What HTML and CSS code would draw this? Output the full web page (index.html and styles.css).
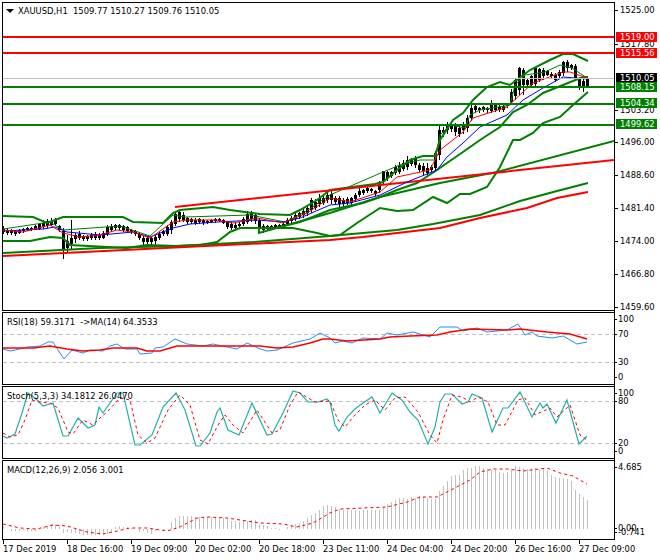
FILE: index.html
```html
<!DOCTYPE html>
<html lang="en">
<head>
<meta charset="utf-8">
<title>XAUUSD,H1</title>
<link rel="stylesheet" href="styles.css">
</head>
<body>
<div class="chart">
  <div class="grid">
    <div class="plots">
      <div class="pane pane-main">
        <svg class="plot" viewBox="3 3 611 307" aria-hidden="true">
          <path class="wick" d="M3 226V234M7 228V235M11 229V235M15 230V236M19 229V234M23 228V233M27 227V231M31 227V231M35 225V230M39 224V230M43 220V229M47 219V228M51 218V226M55 218V225M59 225V232M63 228V259M67 235V252M71 220V250M75 233V243M79 231V240M83 235V241M87 235V241M91 233V240M95 232V240M99 233V240M103 231V239M107 225V236M111 224V232M115 224V230M119 224V230M123 225V232M127 226V233M131 229V234M135 230V236M139 232V240M143 236V245M147 236V245M151 237V245M155 235V245M159 232V240M163 230V236M167 225V236M171 220V234M175 212V226M179 210V222M183 212V222M187 217V224M191 218V224M195 218V225M199 218V224M203 219V225M207 220V224M211 219V223M215 218V223M219 218V222M223 219V224M227 221V229M231 222V230M235 223V230M239 222V228M243 217V226M247 211V224M251 211V222M255 213V224M259 218V233M263 224V233M267 225V231M271 225V230M275 224V229M279 224V229M283 222V228M287 218V225M291 216V223M295 213V221M299 212V219M303 209V218M307 206V216M311 198V213M315 199V210M319 194V207M323 196V205M327 192V203M331 191V204M335 196V204M339 196V207M343 198V207M347 197V205M351 197V206M355 193V201M359 188V197M363 189V195M367 187V193M371 188V193M375 190V196M379 181V193M383 171V185M387 171V181M391 171V178M395 165V175M399 162V174M403 160V171M407 156V170M411 158V166M415 156V168M419 163V172M423 163V175M427 163V176M431 165V172M435 151V170M439 125V160M443 127V137M447 122V134M451 124V132M455 123V136M459 126V137M463 122V134M467 115V132M471 105V121M475 105V113M479 107V113M483 106V112M487 107V113M491 100V113M495 103V112M499 105V112M503 104V112M507 103V108M511 89V104M515 78V100M519 67V95M523 68V95M527 78V86M531 75V87M535 67V86M539 68V82M543 68V80M547 70V76M551 72V78M555 73V82M559 70V78M563 61V76M567 60V72M571 64V70M575 64V80M579 78V90M583 79V92M587 78V88"/>
          <path class="body" d="M3 229V232M7 230V233M11 230V233M15 231V234M19 230V233M23 229V231M27 228V230M31 228V230M35 226V229M39 224V229M43 223V227M47 221V226M51 222V225M55 220V224M59 226V230M63 231V250M67 241V248M71 238V244M75 235V239M79 234V238M83 236V239M87 236V239M91 235V238M95 234V238M99 235V238M103 233V238M107 227V234M111 226V230M115 225V228M119 225V228M123 226V230M127 227V231M131 230V232M135 231V234M139 234V238M143 238V242M147 238V242M151 238V242M155 237V241M159 234V238M163 231V234M167 227V234M171 222V230M175 214V224M179 212V219M183 215V220M187 218V222M191 219V222M195 220V223M199 219V222M203 220V223M207 221V223M211 220V222M215 219V221M219 219V221M223 220V223M227 222V227M231 224V228M235 225V228M239 224V226M243 219V224M247 214V222M251 213V219M255 215V221M259 220V229M263 226V230M267 226V229M271 226V228M275 225V227M279 225V227M283 224V226M287 220V224M291 218V221M295 215V219M299 213V217M303 211V215M307 208V213M311 200V210M315 202V208M319 198V204M323 198V203M327 195V200M331 194V200M335 198V202M339 198V204M343 200V204M347 199V203M351 198V203M355 195V199M359 191V195M363 190V193M367 188V191M371 189V191M375 191V194M379 182V190M383 171V182M387 172V178M391 172V176M395 167V173M399 165V172M403 163V169M407 160V167M411 160V164M415 158V165M419 165V170M423 166V171M427 168V173M431 167V170M435 153V168M439 130V155M443 130V133M447 125V130M451 126V129M455 126V132M459 128V134M463 124V130M467 118V128M471 108V118M475 106V110M479 108V110M483 107V110M487 108V110M491 104V111M495 105V110M499 107V110M503 106V110M507 104V106M511 92V102M515 80V96M519 68V90M523 70V85M527 80V85M531 76V85M535 68V84M539 69V80M543 70V76M547 71V75M551 74V76M555 75V80M559 72V76M563 62V73M567 62V68M571 65V68M575 66V78M579 79V86M583 81V87M587 78V87"/>
          <path class="line-green" d="M3 253L100 248 177 246 253 242 330 236 363 233 397 230 433 224 480 215 520 201 557 191 588 183"/>
          <path class="line-green" d="M259 227V233L330 213 380 197 440 183 497 172 614 141"/>
          <path class="line-green" d="M3 216L33 217 47 223 63 217 123 217 133 222 163 223 173 213 180 210 213 207 230 210 260 214 290 215 300 210 317 200 330 190 375 184 383 182 397 170 410 160 423 156 435 156 440 140 453 120 463 113 473 100 487 87 500 82 510 85 530 70 550 60 563 54 573 54 588 61"/>
          <path class="line-green" d="M3 241L30 241 50 237 63 238 70 245 127 248 147 245 177 246 200 245 217 242 230 232 240 228 257 228 293 228 317 233 330 236 340 235 357 223 380 208 397 211 413 210 433 197 447 203 460 194 470 194 487 187 500 167 513 140 520 140 533 133 543 123 560 117 573 105 588 92"/>
          <path class="line-green" d="M267 230L300 222 330 210 363 203 380 197 397 190 417 183 437 170 447 163 463 152 480 140 500 127 513 112 527 105 543 93 563 85 583 77 588 77"/>
          <path class="line-thin-green" d="M3 229L50 222 63 230 120 226 150 236 173 215 185 217 250 215 285 222 305 212 330 195 383 172 400 165 420 160 435 160 440 135 450 125 465 128 470 115 480 110 510 105 515 85 525 75 545 72 560 65 572 68 587 78"/>
          <path class="line-red" d="M3 256L330 240 363 237 397 233 440 228 480 218 527 208 557 198 588 192"/>
          <path class="line-red" d="M175 207L614 160"/>
          <path class="line-thin-blue" d="M3 231L43 229 55 227 67 232 100 235 133 232 150 237 173 228 190 224 217 222 257 220 283 222 300 218 330 205 350 203 380 195 407 182 437 170 447 157 463 143 480 127 507 115 523 100 543 88 563 77 587 79"/>
          <path class="line-thin-red" d="M3 230L23 232 50 225 63 233 80 237 100 235 117 230 133 232 150 238 173 222 187 220 217 220 233 223 257 218 283 223 307 213 330 198 350 202 380 192 397 177 430 170 440 150 463 132 473 118 507 107 523 92 533 83 563 72 570 72 587 78"/>
          <path class="level-now" d="M3 78.5H614"/>
          <path class="level-red" d="M3 37H614M3 53H614"/>
          <path class="level-green" d="M3 87H614M3 104H614M3 125H614"/>
        </svg>
        <div class="legend legend-main"><span class="caret"></span>XAUUSD,H1&nbsp; 1509.77 1510.27 1509.76 1510.05</div>
      </div>
      <div class="pane pane-sub">
        <svg class="plot" viewBox="3 313 611 71" aria-hidden="true">
          <path class="dash-level" d="M3 334.5H614M3 362.5H614"/>
          <path class="rsi" d="M3 349L10 351 20 349 27 347 40 346 48 342 53 342 58 350 64 359 72 350 83 353 90 350 103 351 110 346 117 344 125 349 137 349 140 354 152 353 155 348 163 347 175 339 187 344 203 346 213 344 227 347 237 349 247 343 258 348 267 351 277 350 293 343 310 339 320 333 330 338 335 343 343 341 352 343 363 338 380 339 387 333 397 335 413 332 430 337 440 327 457 327 463 331 477 328 487 332 507 330 518 324 525 335 532 332 537 336 552 338 563 336 577 344 587 342"/>
          <path class="rsi-ma" d="M3 348L33 348 50 346 67 349 83 351 100 350 113 348 137 348 147 351 160 351 177 346 230 346 260 346 277 348 293 347 310 343 323 339 330 339 347 341 380 339 390 337 410 336 437 335 450 332 470 329 507 330 520 329 547 332 570 334 587 339"/>
        </svg>
        <div class="legend">RSI(18) 59.3171&nbsp; -&gt;MA(14) 64.3533</div>
      </div>
      <div class="pane pane-sub">
        <svg class="plot" viewBox="3 387 611 71" aria-hidden="true">
          <path class="dash-level" d="M3 401.5H614M3 443.5H614"/>
          <path class="stoch" d="M3 436L7 438 15 434 22 413 28 393 35 398 43 406 53 403 63 436 68 436 78 418 88 428 95 425 99 407 103 413 117 393 123 393 135 445 140 445 152 435 163 407 176 393 185 410 196 446 200 446 210 433 217 412 220 408 228 430 239 435 252 403 267 435 272 434 283 413 293 391 300 393 308 402 318 402 327 399 330 402 335 425 339 431 347 417 355 409 363 403 372 397 380 413 392 393 402 400 410 412 418 420 428 444 435 427 440 402 445 394 452 394 462 404 468 402 472 394 482 398 492 432 503 408 508 408 520 392 532 417 540 403 543 408 547 404 556 423 567 400 579 444 587 436"/>
          <path class="signal" d="M3 433L10 437 18 435 25 420 32 400 40 402 50 403 58 408 68 432 73 434 83 420 93 425 100 418 107 412 120 398 130 400 138 435 147 443 155 438 168 410 180 395 190 405 200 440 208 444 218 425 225 415 233 425 243 433 257 410 272 433 280 430 290 405 298 392 305 396 315 402 330 401 338 420 345 427 353 417 365 405 375 400 385 410 395 398 405 397 418 412 430 435 437 443 443 420 452 395 462 397 470 402 478 397 488 402 497 425 505 425 518 400 525 398 535 415 550 408 557 417 570 405 580 435 587 440"/>
        </svg>
        <div class="legend">Stoch(5,3,3) 34.1812 26.0470</div>
      </div>
      <div class="pane pane-macd">
        <svg class="plot" viewBox="3 461 611 78" aria-hidden="true">
          <path class="hist" d="M3 529V526M7 529V529M11 529V531M15 529V531M19 529V531M23 529V530M27 529V531M31 529V531M35 529V531M39 529V529M43 529V527M47 529V526M51 529V524M55 529V524M59 529V525M63 529V533M67 529V532M71 529V533M75 529V533M79 529V534M83 529V535M87 529V535M91 529V535M95 529V535M99 529V535M103 529V535M107 529V534M111 529V533M115 529V527M119 529V526M123 529V527M127 529V527M131 529V528M135 529V529M139 529V532M143 529V531M147 529V533M151 529V534M155 529V531M159 529V529M163 529V531M167 529V529M171 529V522M175 529V518M179 529V516M183 529V516M187 529V516M191 529V516M195 529V517M199 529V517M203 529V517M207 529V517M211 529V517M215 529V518M219 529V518M223 529V518M227 529V519M231 529V521M235 529V521M239 529V522M243 529V521M247 529V521M251 529V520M255 529V520M259 529V524M263 529V525M267 529V526M271 529V528M275 529V528M279 529V530M283 529V529M287 529V527M291 529V526M295 529V524M299 529V523M303 529V521M307 529V518M311 529V515M315 529V513M319 529V510M323 529V506M327 529V505M331 529V506M335 529V507M339 529V509M343 529V510M347 529V510M351 529V510M355 529V510M359 529V511M363 529V510M367 529V510M371 529V510M375 529V510M379 529V510M383 529V508M387 529V504M391 529V502M395 529V500M399 529V498M403 529V498M407 529V499M411 529V497M415 529V498M419 529V496M423 529V497M427 529V498M431 529V499M435 529V499M439 529V491M443 529V486M447 529V481M451 529V476M455 529V475M459 529V475M463 529V470M467 529V468M471 529V468M475 529V466M479 529V466M483 529V468M487 529V469M491 529V470M495 529V470M499 529V472M503 529V473M507 529V472M511 529V470M515 529V466M519 529V467M523 529V468M527 529V469M531 529V469M535 529V468M539 529V470M543 529V469M547 529V470M551 529V475M555 529V477M559 529V478M563 529V478M567 529V479M571 529V481M575 529V490M579 529V494M583 529V497M587 529V500"/>
          <path class="signal" d="M3 524L20 528 37 529 53 525 67 526 87 532 103 534 117 531 130 528 147 528 167 531 180 527 197 518 207 517 227 518 240 520 260 523 283 524 297 527 313 523 330 513 340 509 363 508 387 507 407 502 420 497 437 497 453 489 470 480 480 472 493 469 507 469 523 471 547 468 560 473 573 476 587 484"/>
        </svg>
        <div class="legend">MACD(12,26,9) 2.056 3.001</div>
      </div>
    </div>
    <div class="axis">
      <span class="mark" style="top:3px">1525.00</span>
      <span class="mark" style="top:37px">1517.80</span>
      <span class="mark" style="top:103px">1503.20</span>
      <span class="mark" style="top:135px">1496.00</span>
      <span class="mark" style="top:168px">1488.60</span>
      <span class="mark" style="top:201px">1481.40</span>
      <span class="mark" style="top:234px">1474.00</span>
      <span class="mark" style="top:267px">1466.80</span>
      <span class="mark" style="top:300px">1459.60</span>
      <span class="tag tag-red" style="top:30px">1519.00</span>
      <span class="tag tag-red" style="top:46px">1515.56</span>
      <span class="tag tag-black" style="top:71px">1510.05</span>
      <span class="tag tag-green" style="top:80px">1508.15</span>
      <span class="tag tag-green" style="top:96px">1504.34</span>
      <span class="tag tag-green" style="top:117px">1499.62</span>
      <span class="mark mark-sub" style="top:312px">100</span>
      <span class="mark mark-sub" style="top:327px">70</span>
      <span class="mark mark-sub" style="top:355px">30</span>
      <span class="mark mark-sub" style="top:370px">0</span>
      <span class="mark mark-sub" style="top:386px">100</span>
      <span class="mark mark-sub" style="top:394px">80</span>
      <span class="mark mark-sub" style="top:436px">20</span>
      <span class="mark mark-sub" style="top:444px">0</span>
      <span class="mark mark-sub" style="top:460px">4.685</span>
      <span class="mark mark-sub" style="top:521px">0.00</span>
      <span class="mark mark-sub mark-neg" style="top:525px">-0.741</span>
    </div>
  </div>
  <div class="times">
    <span class="time">17 Dec 2019</span>
    <span class="time">18 Dec 16:00</span>
    <span class="time">19 Dec 09:00</span>
    <span class="time">20 Dec 02:00</span>
    <span class="time">20 Dec 18:00</span>
    <span class="time">23 Dec 11:00</span>
    <span class="time">24 Dec 04:00</span>
    <span class="time">24 Dec 20:00</span>
    <span class="time">26 Dec 16:00</span>
    <span class="time">27 Dec 09:00</span>
  </div>
</div>
</body>
</html>
```

FILE: styles.css
```css
* { box-sizing: border-box; }
html, body { margin: 0; padding: 0; background: #fff; }
body {
  width: 660px;
  height: 560px;
  overflow: hidden;
  font-family: "DejaVu Sans Condensed", "DejaVu Sans", sans-serif;
  font-size: 9.3px;
  line-height: 10px;
  color: #000;
}
.chart { padding-top: 2px; padding-left: 2px; }
.grid { display: flex; align-items: stretch; }
.plots {
  width: 613px;
  display: flex;
  flex-direction: column;
  gap: 1px;
  border-right: 1px solid #000;
}
.pane {
  position: relative;
  border: 1px solid #000;
  border-right: 0;
}
.pane-main { height: 309px; }
.pane-sub { height: 73px; }
.pane-macd { height: 80px; }
.plot { display: block; width: 100%; height: 100%; }
.plot path { fill: none; }
.wick { stroke: #000; stroke-width: 1; transform: translateX(.5px); }
.body { stroke: #000; stroke-width: 3; transform: translateX(.5px); }
.line-green { stroke: #008000; stroke-width: 2; }
.line-thin-green { stroke: #008000; stroke-width: 1; }
.line-red { stroke: #ff0000; stroke-width: 2; }
.line-thin-red { stroke: #ff0000; stroke-width: 1; }
.line-thin-blue { stroke: #0000ff; stroke-width: 1; }
.level-now { stroke: #c0c0c0; stroke-width: 1; }
.level-red { stroke: #ff0000; stroke-width: 2; }
.level-green { stroke: #008000; stroke-width: 2; }
.dash-level { stroke: #c0c0c0; stroke-width: 1; stroke-dasharray: 4 3; }
.rsi { stroke: #1e90ff; stroke-width: 1; }
.rsi-ma { stroke: #ff0000; stroke-width: 1.5; }
.stoch { stroke: #20b2aa; stroke-width: 1.2; }
.signal { stroke: #ff0000; stroke-width: 1; stroke-dasharray: 3 3; }
.hist { stroke: #c0c0c0; stroke-width: 1; transform: translateX(.5px); }
.legend {
  position: absolute;
  left: 4px;
  top: 4px;
  white-space: pre;
}
.legend-main { left: 3px; top: 3px; padding-left: 12px; }
.caret {
  position: absolute;
  left: 0;
  top: 3px;
  border-left: 4px solid transparent;
  border-right: 4px solid transparent;
  border-top: 4px solid #000;
}
.axis {
  position: relative;
  width: 45px;
}
.mark, .tag {
  position: absolute;
  white-space: pre;
}
.mark { left: 5px; }
.mark::before {
  content: "";
  position: absolute;
  left: -5px;
  top: 5px;
  width: 3px;
  height: 1px;
  background: #000;
}
.mark-sub { left: 3px; }
.mark-sub::before { left: -3px; width: 2px; }
.tag {
  left: 1px;
  width: 41px;
  height: 10px;
  padding-left: 4px;
  color: #fff;
}
.tag-red { background: #ff0000; }
.tag-black { background: #000; }
.tag-green { background: #008000; }
.times {
  display: flex;
  padding-left: 1px;
  height: 19px;
}
.time {
  position: relative;
  flex: 0 0 64px;
  padding-top: 4px;
  white-space: pre;
}
.time::before {
  content: "";
  position: absolute;
  left: 0;
  top: 0;
  width: 1px;
  height: 4px;
  background: #000;
}
```
